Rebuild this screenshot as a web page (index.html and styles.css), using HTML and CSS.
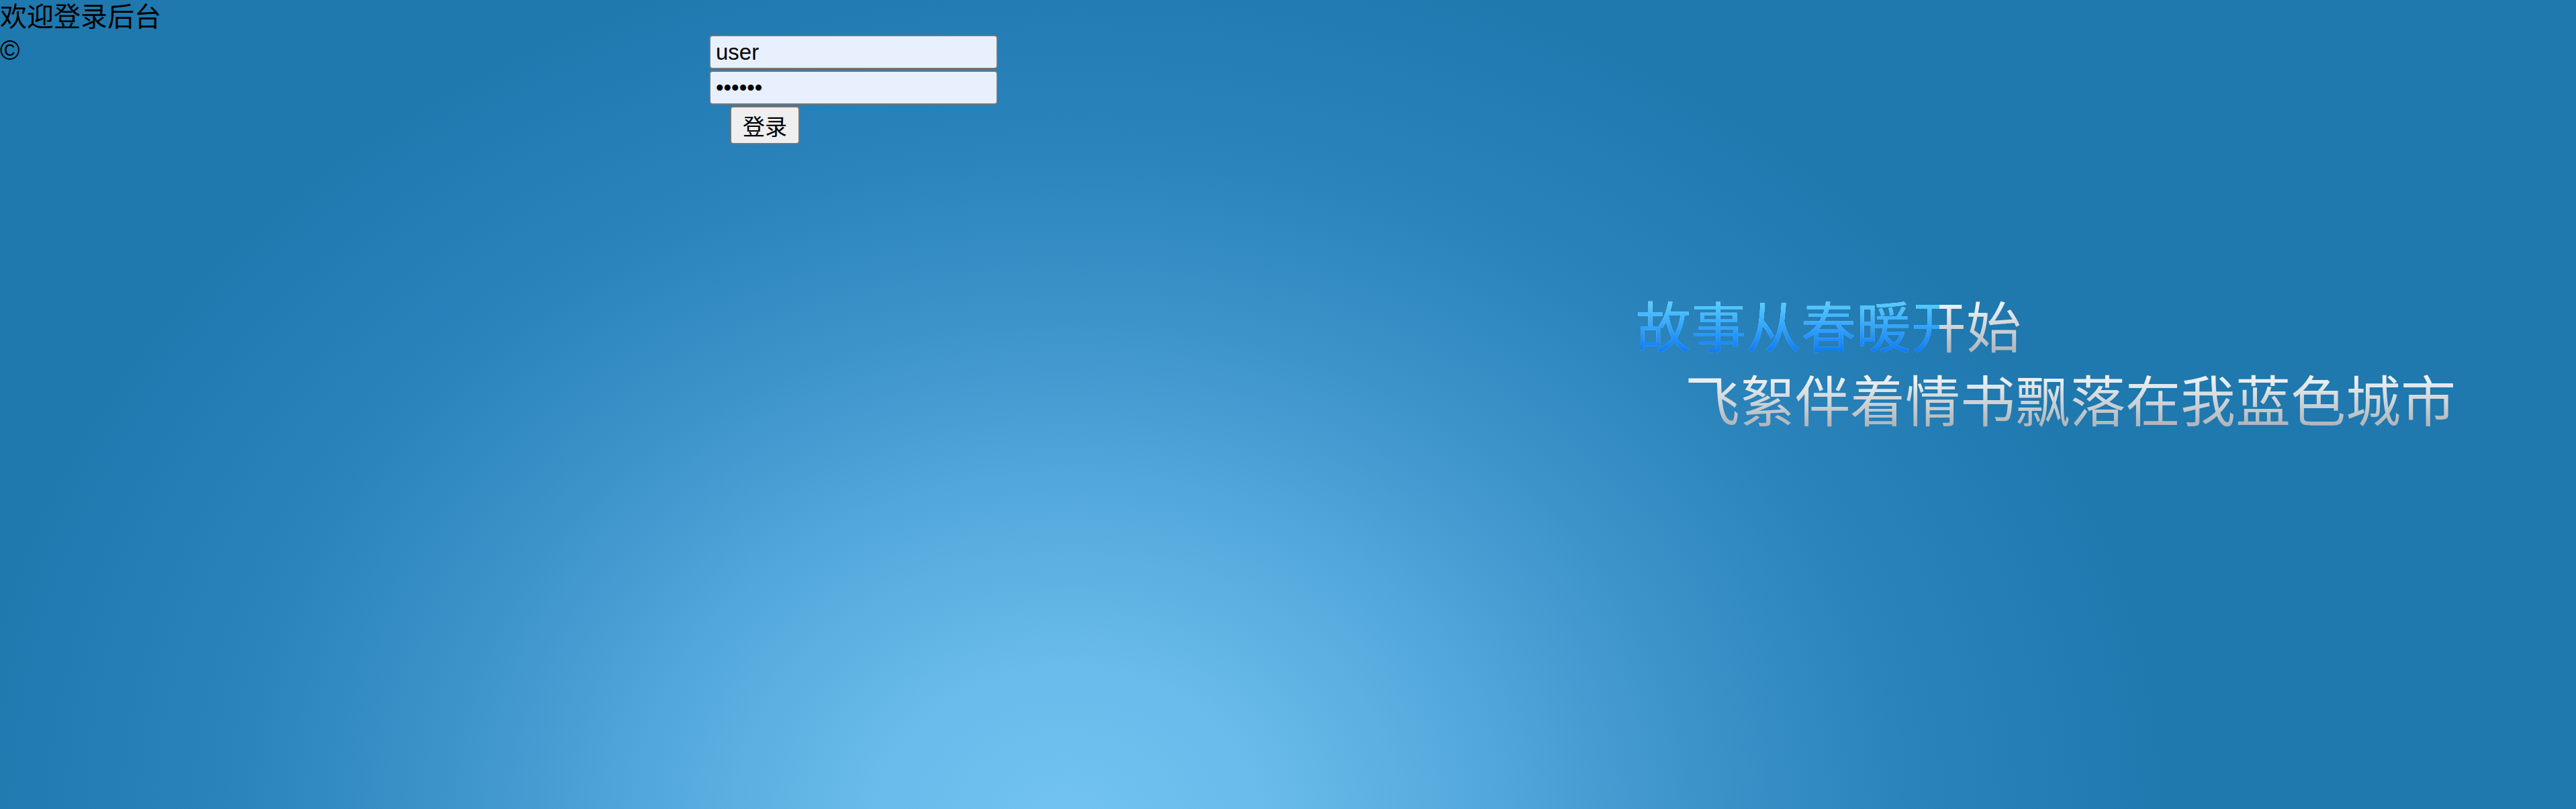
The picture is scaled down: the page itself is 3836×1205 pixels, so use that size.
FILE: index.html
```html
<!DOCTYPE html>
<html lang="zh-CN">
<head>
<meta charset="utf-8">
<title>欢迎登录后台</title>
<link rel="stylesheet" href="styles.css">
</head>
<body>
<div class="page">
  <div class="intro">
    <div class="title">欢迎登录后台</div>
    <div class="copy">©</div>
  </div>
  <form class="login">
    <input class="field" type="text" value="user">
    <input class="field" type="password" value="123456">
    <button class="btn" type="button">登录</button>
  </form>
  <div class="slogan">
    <div class="line line1">故事从春暖开始<span class="fill" aria-hidden="true">故事从春暖开始</span></div>
    <div class="line line2">飞絮伴着情书飘落在我蓝色城市</div>
  </div>
</div>
</body>
</html>
```
FILE: styles.css
```css
html, body {
  margin: 0;
  padding: 0;
  height: 100%;
}
body {
  background: radial-gradient(ellipse 1650px 1340px at 1590px 1230px, #72c3f1 0%, #68bbea 18%, #55aadd 36%, #3d94cb 56%, #2a83bb 76%, #1f78ae 100%);
  background-color: #1f78ae;
  font-family: "Liberation Sans", "Noto Sans CJK SC", sans-serif;
  color: #000;
  overflow: hidden;
}
.page {
  display: flex;
  align-items: flex-start;
  height: 1205px;
}
.intro {
  flex: none;
  width: 1056px;
  font-size: 40px;
  line-height: 50px;
}
.login {
  flex: none;
  margin: 52px 0 0;
  display: flex;
  flex-direction: column;
  align-items: flex-start;
  gap: 2px;
}
.field {
  box-sizing: border-box;
  width: 430px;
  height: 51px;
  margin: 0;
  padding: 0 8px;
  border: 2px solid #767676;
  border-radius: 5px;
  background: #e8f0fe;
  font-family: "Liberation Sans", sans-serif;
  font-size: 33px;
  color: #000;
  outline: none;
}
.btn {
  box-sizing: border-box;
  margin: 0 0 0 31px;
  width: 104px;
  height: 57px;
  padding: 0;
  border: 2px solid #767676;
  border-radius: 5px;
  background: #efefef;
  font-family: "Liberation Sans", "Noto Sans CJK SC", sans-serif;
  font-size: 33px;
  color: #000;
}
.slogan {
  flex: none;
  margin: 428px 0 0 950px;
  font-family: "Noto Sans CJK SC", sans-serif;
  font-size: 82px;
  line-height: 110px;
  white-space: nowrap;
}
.line {
  display: inline-block;
  -webkit-background-clip: text;
  background-clip: text;
  color: transparent;
  background-image: linear-gradient(180deg, #eef2f5 22%, #adb4ba 88%);
}
.line1 {
  position: relative;
}
.line2 {
  display: block;
  width: max-content;
  margin-left: 73px;
}
.fill {
  position: absolute;
  left: 0;
  top: 0;
  width: 452px;
  overflow: hidden;
  -webkit-background-clip: text;
  background-clip: text;
  color: transparent;
  background-image: linear-gradient(180deg, #55cbff 22%, #0a7bff 88%);
}
```
